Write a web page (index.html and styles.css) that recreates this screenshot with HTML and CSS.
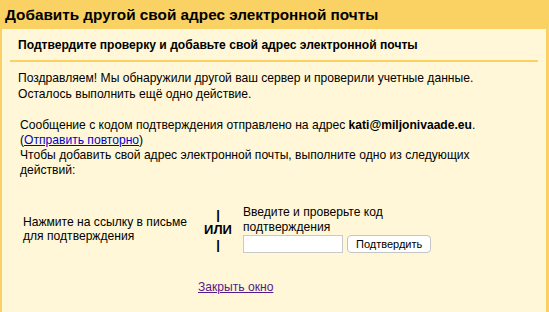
FILE: index.html
```html
<!DOCTYPE html>
<html>
    <head>
        <meta charset="utf-8">
        <link rel="stylesheet" href="styles.css">
    </head>
    <body>
        <div class="title">Добавить другой свой адрес электронной почты</div>
        <div class="panel">
            <div class="subhead">Подтвердите проверку и добавьте свой адрес электронной почты</div>
            <p class="congrats">Поздравляем! Мы обнаружили другой ваш сервер и проверили учетные данные.<br>
                Осталось выполнить ещё одно действие.</p>
            <p class="sent">Сообщение с кодом подтверждения отправлено на адрес <b>kati@miljonivaade.eu</b>.<br>
                (<a href="#" class="resend">Отправить повторно</a>)<br>
                Чтобы добавить свой адрес электронной почты, выполните одно из следующих действий:</p>
            <div class="choice">
                <div class="option left">Нажмите на ссылку в письме для подтверждения</div>
                <div class="or">|<br>ИЛИ<br>|</div>
                <div class="option right">
                    Введите и проверьте код подтверждения
                    <div class="verify">
                        <input type="text" class="code">
                        <button class="confirm">Подтвердить</button>
                    </div>
                </div>
            </div>
            <div class="close"><a href="#" class="closelink">Закрыть окно</a></div>
        </div>
    </body>
</html>
```

FILE: styles.css
```css
html, body {
    margin: 0;
    height: 100%;
}
body {
    background: #fad163;
    font-family: "Liberation Sans", Arial, sans-serif;
    color: #000;
    display: flex;
    flex-direction: column;
}
.title {
    font-size: 15.3px;
    font-weight: bold;
    line-height: 20px;
    height: 29px;
    box-sizing: border-box;
    padding: 5px 5px 0 5px;
}
.panel {
    flex: 1;
    background: #fff7d7;
    margin: 0 3px 0 2px;
}
.subhead {
    font-size: 12.1px;
    font-weight: bold;
    line-height: 16px;
    padding: 8px 8px 7px 8px;
    margin: 0 8px;
    border-bottom: 2px solid #fad163;
}
.congrats {
    font-size: 12.1px;
    line-height: 16px;
    margin: 8px 0 0 16px;
}
.sent {
    font-size: 12.1px;
    line-height: 15px;
    margin: 16px 20px 0 18px;
}
a {
    color: #0000cc;
}
.closelink {
    color: #551a8b;
}
.choice {
    display: flex;
    align-items: center;
    margin: 27px 0 0 21px;
    font-size: 12.1px;
    line-height: 14.5px;
}
.left {
    width: 174px;
}
.or {
    width: 34px;
    padding-left: 4px;
    margin-right: 8px;
    text-align: center;
    font-size: 13px;
    font-weight: bold;
    line-height: 15px;
}
.right {
    width: 190px;
}
.verify {
    display: flex;
    gap: 4px;
    margin-top: 1px;
}
.code {
    width: 100px;
    height: 18px;
    box-sizing: border-box;
    border: 1px solid #c9c9c9;
    background: #fff;
    margin: 0;
}
.confirm {
    height: 18px;
    box-sizing: border-box;
    padding: 0 8px;
    font-family: "Liberation Sans", Arial, sans-serif;
    font-size: 11px;
    background: #fff;
    border: 1px solid #c4c4c4;
    border-radius: 4px;
    margin: 0;
}
.close {
    font-size: 12.1px;
    margin: 27px 0 0 196px;
}
```
